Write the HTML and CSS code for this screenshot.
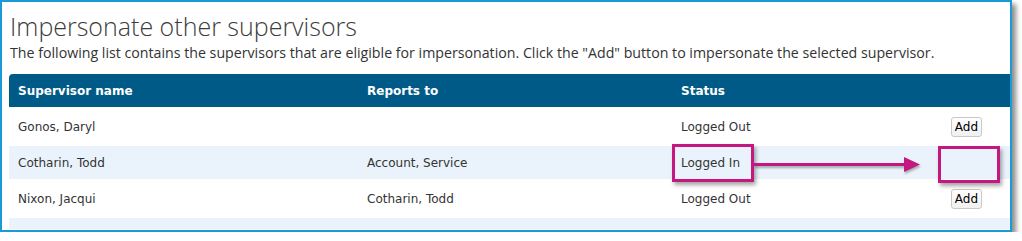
FILE: index.html
```html
<!DOCTYPE html>
<html lang="en">
<head>
    <meta charset="UTF-8">
    <title>Impersonate other supervisors</title>
    <link rel="stylesheet" href="styles.css">
</head>
<body>
    <div class="frame">
        <h1 class="page-title">Impersonate other supervisors</h1>
        <p class="page-intro">The following list contains the supervisors that are eligible for impersonation. Click the "Add" button to impersonate the selected supervisor.</p>

        <table class="grid">
            <colgroup>
                <col class="col-name">
                <col class="col-reports">
                <col class="col-status">
                <col>
            </colgroup>
            <thead>
                <tr>
                    <th>Supervisor name</th>
                    <th>Reports to</th>
                    <th>Status</th>
                    <th></th>
                </tr>
            </thead>
            <tbody>
                <tr class="row-tall">
                    <td>Gonos, Daryl</td>
                    <td></td>
                    <td>Logged Out</td>
                    <td class="cell-action"><button class="btn-add">Add</button></td>
                </tr>
                <tr class="row-alt">
                    <td>Cotharin, Todd</td>
                    <td>Account, Service</td>
                    <td>Logged In</td>
                    <td class="cell-action"></td>
                </tr>
                <tr class="row-tall">
                    <td>Nixon, Jacqui</td>
                    <td>Cotharin, Todd</td>
                    <td>Logged Out</td>
                    <td class="cell-action"><button class="btn-add">Add</button></td>
                </tr>
                <tr class="row-alt row-end">
                    <td colspan="4"></td>
                </tr>
            </tbody>
        </table>

        <!-- callout overlay -->
        <div class="callout callout-status"></div>
        <div class="callout callout-action"></div>
        <svg class="callout-arrow" width="170" height="18" viewBox="0 0 170 18">
            <rect x="0" y="7" width="152" height="3" fill="#c4177f"/>
            <polygon points="150,1 166,8.5 150,16" fill="#c4177f"/>
        </svg>
    </div>
</body>
</html>
```

FILE: styles.css
```css
body {
    margin: 0;
    background: #ffffff;
    font-family: "DejaVu Sans", Verdana, sans-serif;
    color: #333333;
}

.frame {
    position: relative;
    box-sizing: border-box;
    width: 1012px;
    height: 232px;
    border: 2px solid #1a9bd7;
    padding-left: 7px;
    background: #ffffff;
    box-shadow: 4px 4px 5px rgba(0, 0, 0, 0.45);
    overflow: hidden;
}

.page-title {
    margin: 0;
    padding: 9px 0 0 1px;
    font-family: "Open Sans", sans-serif;
    font-weight: 300;
    font-size: 25px;
    line-height: 31px;
    color: #3c3c3c;
}

.page-intro {
    margin: 0 0 10px 1px;
    font-family: "Open Sans", sans-serif;
    font-size: 14.2px;
    line-height: 22px;
    color: #333333;
}

.grid {
    width: 100%;
    border-collapse: collapse;
    table-layout: fixed;
    font-size: 12px;
}

.col-name { width: 349px; }
.col-reports { width: 314px; }
.col-status { width: 250px; }

.grid th {
    height: 33px;
    padding: 0 9px;
    text-align: left;
    background: #005a87;
    color: #ffffff;
    font-weight: bold;
}

.grid th:first-child {
    border-top-left-radius: 4px;
}

.grid td {
    padding: 0 9px;
    color: #333333;
}

.row-tall td {
    height: 39px;
}

.row-alt td {
    height: 33px;
    background: #eaf3fb;
}

.row-end td {
    height: 11px;
    padding: 0;
}

.cell-action {
    text-align: right;
}

.btn-add {
    margin-right: 19px;
    padding: 1px 3px;
    border: 1px solid #c8c8c8;
    border-radius: 3px;
    background: linear-gradient(#ffffff, #f0f0f0);
    font-family: "DejaVu Sans", Verdana, sans-serif;
    font-size: 12px;
    line-height: 16px;
    color: #000000;
}

.callout {
    position: absolute;
    box-sizing: border-box;
    border: 3px solid #c4177f;
    box-shadow: 2px 3px 4px rgba(0, 0, 0, 0.35);
}

.callout-status {
    left: 670px;
    top: 142px;
    width: 82px;
    height: 38px;
}

.callout-action {
    left: 936px;
    top: 144px;
    width: 62px;
    height: 37px;
}

.callout-arrow {
    position: absolute;
    left: 752px;
    top: 154px;
    filter: drop-shadow(1px 2px 1px rgba(0, 0, 0, 0.3));
}
```
